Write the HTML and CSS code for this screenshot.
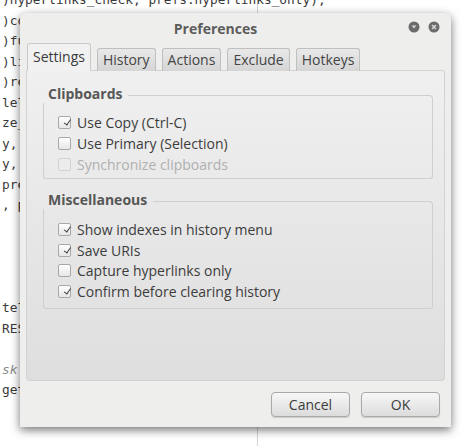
FILE: index.html
```
<!DOCTYPE html>
<html lang="en">
<head>
    <meta charset="UTF-8">
    <title>Preferences</title>
    <link rel="stylesheet" href="styles.css">
</head>
<body>
    <!-- editor achter het dialoogvenster, alleen de zichtbare stukjes -->
<pre class="code">)hyperlinks_check, prefs.hyperlinks_only);
)confirm_clear_check, prefs.confirm_clear);
)fu
)li
)re
lel
ze_
y,
y,
pre
, p




tel
RES

<span class="comment">sk</span>
get</pre>

    <div class="window">
        <div class="titlebar">
            <span class="title">Preferences</span>
            <div class="controls">
                <svg width="12" height="12" viewBox="0 0 12 12">
                    <circle cx="6" cy="6" r="5.5" fill="#6b6b6b"/>
                    <path d="M3.6 4.6 L6 7.6 L8.4 4.6 Z" fill="#d8d8d8"/>
                </svg>
                <svg width="12" height="12" viewBox="0 0 12 12">
                    <circle cx="6" cy="6" r="5.5" fill="#6b6b6b"/>
                    <path d="M4 4 L8 8 M8 4 L4 8" stroke="#d8d8d8" stroke-width="1.5"/>
                </svg>
            </div>
        </div>

        <div class="tabs">
            <div class="tab active">Settings</div>
            <div class="tab">History</div>
            <div class="tab">Actions</div>
            <div class="tab">Exclude</div>
            <div class="tab">Hotkeys</div>
        </div>

        <div class="page">
            <div class="group">
                <div class="group-head"><span class="group-label">Clipboards</span><span class="rule"></span></div>
                <div class="group-body">
                    <div class="check"><span class="box on"></span>Use Copy (Ctrl-C)</div>
                    <div class="check"><span class="box"></span>Use Primary (Selection)</div>
                    <div class="check disabled"><span class="box"></span>Synchronize clipboards</div>
                </div>
            </div>

            <div class="group misc">
                <div class="group-head"><span class="group-label">Miscellaneous</span><span class="rule"></span></div>
                <div class="group-body">
                    <div class="check"><span class="box on"></span>Show indexes in history menu</div>
                    <div class="check"><span class="box on"></span>Save URIs</div>
                    <div class="check"><span class="box"></span>Capture hyperlinks only</div>
                    <div class="check"><span class="box on"></span>Confirm before clearing history</div>
                </div>
            </div>
        </div>

        <div class="buttons">
            <button class="btn">Cancel</button>
            <button class="btn">OK</button>
        </div>
    </div>
</body>
</html>
```

FILE: styles.css
```
body {
    margin: 0;
    height: 446px;
    overflow: hidden;
    background: linear-gradient(#d6d6d6, #d6d6d6) 257px 0 / 1px 100% no-repeat, #fff;
    position: relative;
}

.code {
    margin: -10px 0 0 0;
    padding-left: 2px;
    font-family: "DejaVu Sans Mono", monospace;
    font-size: 12.8px;
    line-height: 20.55px;
    color: #3a3a3a;
}

.comment {
    color: #8a8a8a;
    font-style: italic;
}

/* dialoogvenster */
.window {
    position: absolute;
    left: 20px;
    top: 13px;
    width: 431px;
    height: 414px;
    background: #eeeeed;
    border-radius: 6px 6px 0 0;
    box-shadow: 0 3px 10px rgba(0, 0, 0, 0.55);
    font-family: "Open Sans", sans-serif;
    font-size: 14px;
    color: #3c3c3c;
    display: flex;
    flex-direction: column;
}

.titlebar {
    height: 30px;
    display: flex;
    align-items: center;
    justify-content: center;
    padding-right: 40px;
    position: relative;
}

.title {
    font-weight: bold;
    font-size: 14px;
    color: #5c5c5c;
}

.controls {
    position: absolute;
    right: 11px;
    top: 8px;
    display: flex;
    gap: 8px;
}

.tabs {
    display: flex;
    align-items: flex-end;
    gap: 6px;
    padding-left: 7px;
    height: 28px;
    margin-bottom: -1px;
    position: relative;
    z-index: 1;
}

.tab {
    height: 23px;
    line-height: 22px;
    padding: 0 5px;
    border: 1px solid #bfbfbf;
    border-bottom: none;
    border-radius: 3px 3px 0 0;
    background: linear-gradient(#e9e9e9, #d5d5d5);
    color: #444;
    box-sizing: border-box;
}

.tab.active {
    height: 28px;
    line-height: 26px;
    padding: 0 5px 2px;
    background: #f1f1f1;
    border-color: #c9c9c9;
    color: #3a3a3a;
}

.page {
    margin: 0 6px;
    height: 311px;
    box-sizing: border-box;
    border: 1px solid #d2d2d2;
    border-radius: 0 3px 3px 3px;
    background: linear-gradient(#f0f0f0, #dedede);
    padding: 14px 11px 0 16px;
}

.group-head {
    display: flex;
    height: 18px;
    line-height: 18px;
}

.group-label {
    font-weight: bold;
    color: #575757;
    padding-left: 5px;
    margin-right: 6px;
}

.rule {
    flex: 1;
    margin-top: 10px;
    border-top: 1px solid #cfcfcf;
    border-right: 1px solid #cfcfcf;
    border-top-right-radius: 4px;
}

.group-body {
    border: 1px solid #cfcfcf;
    border-top: none;
    border-radius: 0 0 3px 3px;
    padding: 9px 0 3px 14px;
}

.misc {
    margin-top: 12px;
}

.misc .group-body {
    padding-top: 10px;
    padding-bottom: 6px;
}

.check {
    display: flex;
    align-items: center;
    height: 21px;
}

.misc .check {
    height: 20.7px;
}

.box {
    width: 11px;
    height: 11px;
    border: 1px solid #a8a8a8;
    border-radius: 2px;
    background: linear-gradient(#ffffff, #e6e6e6);
    margin-right: 6px;
    position: relative;
}

.box.on::after {
    content: "";
    position: absolute;
    left: 3px;
    top: 0px;
    width: 6px;
    height: 3px;
    border-left: 1.3px solid #3c3c3c;
    border-bottom: 1.3px solid #3c3c3c;
    transform: rotate(-55deg) translate(-1px, 3px);
}

.check.disabled {
    color: #b0b0b0;
}

.check.disabled .box {
    border-color: #d2d2d2;
    background: #ececec;
}

.buttons {
    display: flex;
    justify-content: flex-end;
    gap: 11px;
    padding: 11px 11px 0 0;
}

.btn {
    width: 79px;
    height: 25px;
    font-family: "Open Sans", sans-serif;
    font-size: 14px;
    color: #3c3c3c;
    background: linear-gradient(#f7f7f7, #dcdcdc);
    border: 1px solid #a9a9a9;
    border-radius: 4px;
    box-shadow: 0 1px 1px rgba(0, 0, 0, 0.15);
    padding: 0;
}
```
